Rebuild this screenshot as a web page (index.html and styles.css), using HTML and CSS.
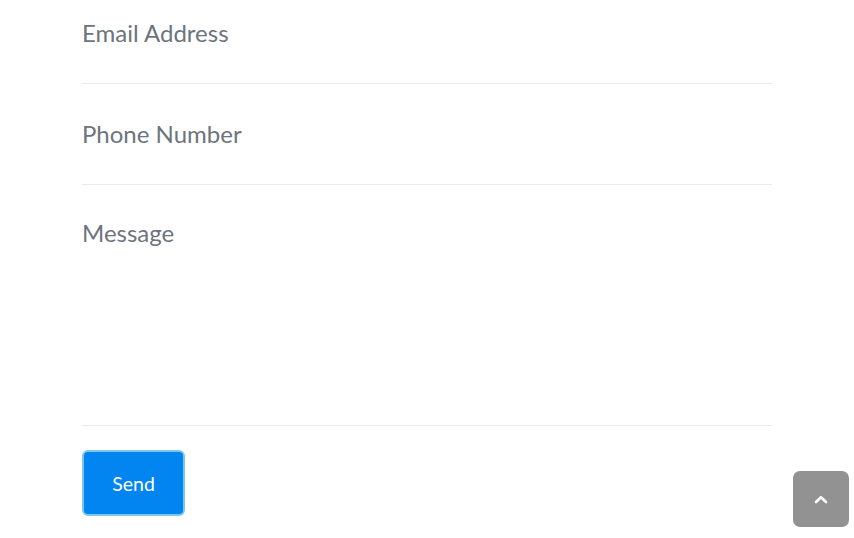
FILE: index.html
```html
<!DOCTYPE html>
<html>
<head>
<meta charset="utf-8">
<link rel="stylesheet" href="styles.css">
</head>
<body>
<form class="contact">
  <div class="group"><input class="field" type="text" placeholder="Email Address"></div>
  <div class="group"><input class="field" type="text" placeholder="Phone Number"></div>
  <div class="group"><textarea class="field area" placeholder="Message"></textarea></div>
  <div class="actions"><button type="button" class="send">Send</button></div>
</form>
<a class="to-top" href="#">
  <svg width="14" height="9" viewBox="0 0 14 9"><path d="M2 7 L7 2.3 L12 7" fill="none" stroke="#fff" stroke-width="2.6" stroke-linecap="round" stroke-linejoin="round"/></svg>
</a>
</body>
</html>
```
FILE: styles.css
```css
html, body { margin: 0; padding: 0; background: #fff; }
body { font-family: Lato, "Open Sans", sans-serif; overflow: hidden; height: 538px; }
.contact { width: 690px; margin: -17px 0 0 82px; }
.group { border-bottom: 1px solid #e9ecef; }
.field {
  display: block; width: 100%; box-sizing: border-box;
  border: none; outline: none; background: transparent;
  font-family: Lato, sans-serif; font-size: 24px; color: #495057;
  padding: 0; margin: 0;
}
input.field { height: 100px; padding-bottom: 2px; }
.field::placeholder { color: #6c757d; opacity: 1; }
.area { height: 240px; resize: none; padding-top: 30px; line-height: 1.5; }
.actions { padding-top: 24px; }
.send {
  width: 103px; height: 66px; box-sizing: border-box;
  background: #0285f0; color: #fff; border: 2px solid #7cc8e8;
  border-radius: 6px; font-family: Lato, sans-serif; font-size: 19.5px;
  padding: 0; cursor: pointer;
}
.to-top {
  position: fixed; right: 5px; bottom: 11px;
  width: 56px; height: 56px; border-radius: 7px;
  background: #929292; display: flex; align-items: center; justify-content: center;
}
```
